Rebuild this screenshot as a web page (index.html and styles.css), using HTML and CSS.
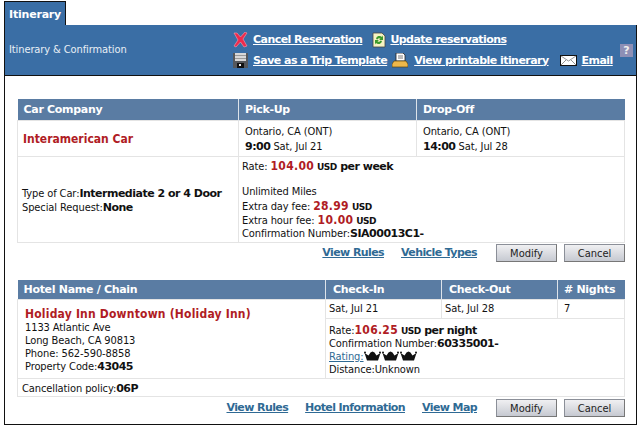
FILE: index.html
```html
<!DOCTYPE html>
<html lang="en">

<head>
    <meta charset="UTF-8">
    <title>Itinerary</title>
    <link rel="stylesheet" href="styles.css">
</head>

<body>
    <div class="tabRow">
        <div class="tab">Itinerary</div>
    </div>
    <div class="frame">
        <div class="bar">
            <div class="barTitle">Itinerary &amp; Confirmation</div>
            <div class="actions">
                <div class="actionRow">
                    <svg class="icon" width="15" height="16" viewBox="0 0 15 16">
                        <path d="M1 1 L4 1 L7.5 5 L12 0 L14 1 L10 7 L14 14 L11 15 L7.5 10 L3 15 L1 14 L5 8 Z" fill="#ee2a4c" stroke="#f7a0b0" stroke-width="0.6"/>
                    </svg>
                    <a href="#" class="link act1">Cancel Reservation</a>
                    <svg class="icon icon2" width="14" height="16" viewBox="0 0 14 16">
                        <path d="M1 1 H10 L13 4 V15 H1 Z" fill="#f6f3c4" stroke="#444" stroke-width="0.8"/>
                        <path d="M4 7 A3.5 3.5 0 0 1 10 5 L11 3.5 V8 H7 L8.5 6.8 A2 2 0 0 0 5.5 7.6 Z" fill="#3c9a2c"/>
                        <path d="M10 9 A3.5 3.5 0 0 1 4 11 L3 12.5 V8 H7 L5.5 9.2 A2 2 0 0 0 8.5 8.4 Z" fill="#3c9a2c"/>
                    </svg>
                    <a href="#" class="link">Update reservations</a>
                </div>
                <div class="actionRow">
                    <svg class="icon" width="15" height="15" viewBox="0 0 15 15">
                        <rect x="0" y="0" width="15" height="15" fill="#55585c"/>
                        <rect x="2" y="0" width="11" height="8" fill="#d8d8d8"/>
                        <rect x="2" y="2" width="11" height="1" fill="#9a9a9a"/>
                        <rect x="2" y="5" width="11" height="1" fill="#9a9a9a"/>
                        <rect x="4" y="10" width="7" height="5" fill="#111"/>
                        <rect x="6" y="11" width="2" height="2" fill="#eee"/>
                    </svg>
                    <a href="#" class="link act2">Save as a Trip Template</a>
                    <svg class="icon icon3" width="16" height="15" viewBox="0 0 16 15">
                        <path d="M4 0 H11 L13 2 V8 H4 Z" fill="#fff" stroke="#222" stroke-width="0.8"/>
                        <path d="M6 3 H11 M6 5 H11" stroke="#555" stroke-width="0.8"/>
                        <path d="M2 8 H14 L16 11 V14 H0 V11 Z" fill="#eeb84a" stroke="#5a4410" stroke-width="0.7"/>
                    </svg>
                    <a href="#" class="link act3">View printable itinerary</a>
                    <svg class="icon" width="17" height="11" viewBox="0 0 17 11">
                        <rect x="0.5" y="0.5" width="16" height="10" fill="#fff" stroke="#111"/>
                        <path d="M1 1 L8.5 6 L16 1 M1 10 L6 5 M16 10 L11 5" fill="none" stroke="#777" stroke-width="0.8"/>
                    </svg>
                    <a href="#" class="link">Email</a>
                </div>
            </div>
            <div class="help">?</div>
        </div>

        <div class="content">
            <table class="grid carTable">
                <tr>
                    <th class="carCol1">Car Company</th>
                    <th class="carCol2">Pick-Up</th>
                    <th>Drop-Off</th>
                </tr>
                <tr class="carRow">
                    <td class="company">Interamerican Car</td>
                    <td>Ontario, CA (ONT)<br><b>9:00</b> Sat, Jul 21</td>
                    <td>Ontario, CA (ONT)<br><b>14:00</b> Sat, Jul 28</td>
                </tr>
                <tr>
                    <td class="typeCell">Type of Car:<b>Intermediate 2 or 4 Door</b><br>Special Request:<b>None</b></td>
                    <td colspan="2" class="rateCell">
                        <div class="rateTop">Rate: <span class="price">104.00</span> <b><small>USD</small> per week</b></div>
                        <div class="rateLine">Unlimited Miles</div>
                        <div class="rateLine">Extra day fee: <span class="price">28.99</span> <b><small>USD</small></b></div>
                        <div class="rateLine">Extra hour fee: <span class="price">10.00</span> <b><small>USD</small></b></div>
                        <div class="rateLine">Confirmation Number:<b>SIA00013C1-</b></div>
                    </td>
                </tr>
            </table>
            <div class="linkRow">
                <a href="#" class="blueLink">View Rules</a>
                <a href="#" class="blueLink">Vehicle Types</a>
                <button class="btn btnFirst">Modify</button>
                <button class="btn">Cancel</button>
            </div>

            <table class="grid hotelTable">
                <tr>
                    <th class="hotelCol1">Hotel Name / Chain</th>
                    <th class="hotelCol2">Check-In</th>
                    <th class="hotelCol2">Check-Out</th>
                    <th># Nights</th>
                </tr>
                <tr class="dateRow">
                    <td rowspan="2" class="hotelCell">
                        <div class="hotelName">Holiday Inn Downtown (Holiday Inn)</div>
                        1133 Atlantic Ave<br>
                        Long Beach, CA 90813<br>
                        Phone: 562-590-8858<br>
                        Property Code:<b>43045</b>
                    </td>
                    <td>Sat, Jul 21</td>
                    <td>Sat, Jul 28</td>
                    <td class="nights">7</td>
                </tr>
                <tr>
                    <td colspan="3" class="hotelRate">
                        <div class="hotelLine">Rate:<span class="price">106.25</span> <b><small>USD</small> per night</b></div>
                        <div class="hotelLine">Confirmation Number:<b>60335001-</b></div>
                        <div class="hotelLine"><a href="#" class="rating">Rating:</a><svg class="crowns" width="53" height="10" viewBox="0 0 53 10">
                            <defs>
                                <g id="crown">
                                    <path d="M0.5 2 L4.5 4.5 L6.5 1.5 L8.5 0.5 L10.5 1.5 L12.5 4.5 L16.5 2 L14 9.5 H3 Z" fill="#111"/>
                                    <circle cx="1" cy="1.5" r="1" fill="#111"/>
                                    <circle cx="16" cy="1.5" r="1" fill="#111"/>
                                </g>
                            </defs>
                            <use href="#crown"/>
                            <use href="#crown" x="18"/>
                            <use href="#crown" x="36"/>
                        </svg></div>
                        <div class="hotelLine">Distance:Unknown</div>
                    </td>
                </tr>
                <tr class="policyRow">
                    <td colspan="4">Cancellation policy:<b>06P</b></td>
                </tr>
            </table>
            <div class="linkRow hotelLinks">
                <a href="#" class="blueLink">View Rules</a>
                <a href="#" class="blueLink">Hotel Information</a>
                <a href="#" class="blueLink">View Map</a>
                <button class="btn btnFirst">Modify</button>
                <button class="btn">Cancel</button>
            </div>
        </div>
    </div>
</body>

</html>
```

FILE: styles.css
```css
* {
    margin: 0;
    padding: 0;
    box-sizing: border-box;
}

body {
    font-family: "DejaVu Sans Condensed", "DejaVu Sans", sans-serif;
    font-size: 11px;
    line-height: 14px;
    letter-spacing: -0.1px;
    color: #111;
    background-color: white;
    overflow: hidden;
}

b {
    font-family: "DejaVu Sans", sans-serif;
    font-weight: bold;
    letter-spacing: -0.5px;
}

small {
    font-size: 9px;
}

.tabRow {
    display: flex;
    padding: 1px 0 0 4px;
}

.tab {
    width: 62px;
    height: 24px;
    padding: 6px 0 0 4px;
    background-color: #3a6ea5;
    border: 1px solid #111;
    border-bottom: none;
    color: white;
    font-family: "DejaVu Sans", sans-serif;
    font-weight: bold;
    letter-spacing: -0.2px;
}

.frame {
    width: 633px;
    height: 400px;
    margin-left: 4px;
    border: 1px solid #111;
    border-top: none;
}

.bar {
    display: flex;
    align-items: center;
    height: 51px;
    background-color: #3a6ea5;
    border-bottom: 1px solid #111;
    color: #e8eef5;
}

.barTitle {
    width: 228px;
    padding-left: 4px;
}

.actions {
    display: flex;
    flex-direction: column;
    gap: 7px;
    width: 387px;
}

.actionRow {
    display: flex;
    align-items: center;
    height: 14px;
}

.icon {
    flex-shrink: 0;
    margin-right: 5px;
}

.act1 {
    margin-right: 10px;
}

.icon2 {
    margin-right: 4px;
}

.act2 {
    margin-right: 5px;
}

.icon3 {
    margin-right: 6px;
}

.act3 {
    margin-right: 11px;
}

.link {
    color: white;
    font-family: "DejaVu Sans", sans-serif;
    font-weight: bold;
    letter-spacing: -0.55px;
    white-space: nowrap;
}

.help {
    width: 13px;
    height: 13px;
    line-height: 13px;
    background-color: #8d8fb5;
    color: #eee;
    font-family: "DejaVu Sans", sans-serif;
    font-weight: bold;
    text-align: center;
}

.content {
    padding: 23px 8px 0 12px;
}

.grid {
    width: 608px;
    table-layout: fixed;
    border-collapse: collapse;
}

.grid th {
    height: 21px;
    padding: 2px 0 0 6px;
    background-color: #5a7ca3;
    border-left: 1px solid #dde3ea;
    color: white;
    font-family: "DejaVu Sans", sans-serif;
    font-size: 11px;
    font-weight: bold;
    letter-spacing: -0.3px;
    text-align: left;
}

.grid th:first-child {
    border-left: none;
}

.grid td {
    border: 1px solid #e4e4e4;
    padding-left: 6px;
}

.carCol1 {
    width: 221px;
}

.carCol2 {
    width: 178px;
}

.carRow td {
    height: 36px;
    padding-top: 2px;
    line-height: 15px;
}

.grid .company {
    padding-left: 5px;
    color: #b01c24;
    font-family: "DejaVu Sans Condensed", "DejaVu Sans", sans-serif;
    font-size: 12px;
    font-weight: bold;
    letter-spacing: 0;
}

.grid .typeCell {
    padding: 3px 0 0 4px;
}

.grid .rateCell {
    height: 86px;
    padding-left: 3px;
}

.rateTop {
    height: 28px;
    padding-top: 2px;
}

.rateLine {
    height: 14px;
}

.price {
    color: #b01c24;
    font-family: "DejaVu Sans Condensed", "DejaVu Sans", sans-serif;
    font-size: 12px;
    font-weight: bold;
    letter-spacing: 0.3px;
}

.linkRow {
    display: flex;
    justify-content: flex-end;
    align-items: center;
    gap: 7px;
    width: 608px;
    height: 37px;
    padding-bottom: 16px;
}

.hotelLinks {
    height: 24px;
    padding-bottom: 2px;
}

.blueLink {
    margin-right: 10px;
    color: #2f6a94;
    font-family: "DejaVu Sans", sans-serif;
    font-weight: bold;
    letter-spacing: -0.6px;
}

.btn {
    width: 61px;
    height: 18px;
    background: linear-gradient(#f0f0f2, #c6c9d1);
    border: 1px solid #8b8f98;
    border-right-color: #777;
    border-bottom-color: #777;
    color: #222;
    font-family: "DejaVu Sans Condensed", "DejaVu Sans", sans-serif;
    font-size: 11px;
}

.btnFirst {
    margin-left: 2px;
}

.hotelTable th {
    height: 20px;
}

.hotelCol1 {
    width: 308px;
}

.hotelCol2 {
    width: 116px;
}

.grid .hotelCol2 {
    padding-left: 7px;
}

.dateRow td {
    height: 19px;
    padding-left: 3px;
}

.dateRow .nights {
    padding-left: 6px;
}

.grid .hotelCell {
    padding: 7px 0 0 7px;
    vertical-align: top;
    line-height: 13px;
}

.hotelName {
    color: #b01c24;
    font-family: "DejaVu Sans Condensed", "DejaVu Sans", sans-serif;
    font-size: 12px;
    font-weight: bold;
    letter-spacing: 0.2px;
    line-height: 14px;
}

.grid .hotelRate {
    height: 60px;
    padding: 2px 0 0 3px;
    line-height: 13px;
}

.hotelLine {
    height: 13px;
}

.rating {
    color: #2f6a94;
}

.crowns {
    vertical-align: -1px;
}

.grid .policyRow td {
    height: 18px;
    padding: 2px 0 0 4px;
}
```
